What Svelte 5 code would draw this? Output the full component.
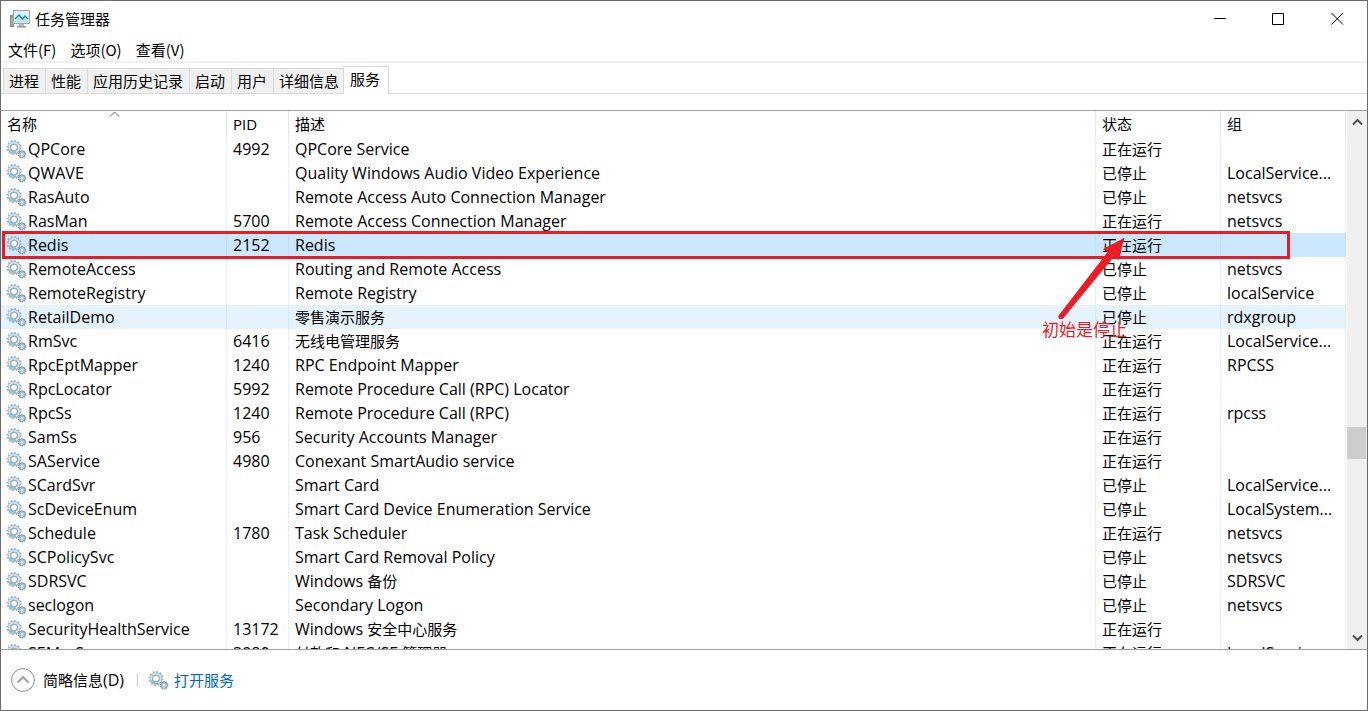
<script>
  const tabs = ['进程', '性能', '应用历史记录', '启动', '用户', '详细信息', '服务'];
  const menus = ['文件(F)', '选项(O)', '查看(V)'];
  const on = '正在运行';
  const off = '已停止';
  const services = [
    ['QPCore', '4992', 'QPCore Service', on, ''],
    ['QWAVE', '', 'Quality Windows Audio Video Experience', off, 'LocalService...'],
    ['RasAuto', '', 'Remote Access Auto Connection Manager', off, 'netsvcs'],
    ['RasMan', '5700', 'Remote Access Connection Manager', on, 'netsvcs'],
    ['Redis', '2152', 'Redis', on, ''],
    ['RemoteAccess', '', 'Routing and Remote Access', off, 'netsvcs'],
    ['RemoteRegistry', '', 'Remote Registry', off, 'localService'],
    ['RetailDemo', '', '零售演示服务', off, 'rdxgroup'],
    ['RmSvc', '6416', '无线电管理服务', on, 'LocalService...'],
    ['RpcEptMapper', '1240', 'RPC Endpoint Mapper', on, 'RPCSS'],
    ['RpcLocator', '5992', 'Remote Procedure Call (RPC) Locator', on, ''],
    ['RpcSs', '1240', 'Remote Procedure Call (RPC)', on, 'rpcss'],
    ['SamSs', '956', 'Security Accounts Manager', on, ''],
    ['SAService', '4980', 'Conexant SmartAudio service', on, ''],
    ['SCardSvr', '', 'Smart Card', off, 'LocalService...'],
    ['ScDeviceEnum', '', 'Smart Card Device Enumeration Service', off, 'LocalSystem...'],
    ['Schedule', '1780', 'Task Scheduler', on, 'netsvcs'],
    ['SCPolicySvc', '', 'Smart Card Removal Policy', off, 'netsvcs'],
    ['SDRSVC', '', 'Windows 备份', off, 'SDRSVC'],
    ['seclogon', '', 'Secondary Logon', off, 'netsvcs'],
    ['SecurityHealthService', '13172', 'Windows 安全中心服务', on, ''],
    ['SEMgrSvc', '3980', '付款和 NFC/SE 管理器', on, 'LocalService...']
  ];
  // Latin runs are set one pixel larger than Chinese runs.
  const runs = (text) => text.split(/([\u4e00-\u9fff]+)/).filter(Boolean);
  const isHan = (text) => /[\u4e00-\u9fff]/.test(text);
  let selected = $state('Redis');
  let active = $state('服务');
</script>

{#snippet gears()}
  <svg class="gears" width="21" height="20" viewBox="0 0 21 20" aria-hidden="true">
    <circle cx="8" cy="8.5" r="6.6" fill="none" stroke="#a3b6c3" stroke-width="2" stroke-dasharray="1.7 1.76" />
    <circle cx="8" cy="8.5" r="4.9" fill="none" stroke="#94aebf" stroke-width="2.8" />
    <circle cx="8" cy="8.5" r="4.8" fill="none" stroke="#cbe4f2" stroke-width="2" />
    <path d="M3.6 10.4A4.8 4.8 0 0 0 10 12.9" fill="none" stroke="#84bfe3" stroke-width="1.8" />
    <circle cx="8" cy="8.5" r="3.4" fill="#fff" stroke="#80909b" stroke-width=".9" />
    <circle cx="16" cy="15.2" r="3.7" fill="none" stroke="#8a9dab" stroke-width="1.3" stroke-dasharray="1.3 1.02" />
    <circle cx="16" cy="15.2" r="2.5" fill="#fff" stroke="#708b9e" stroke-width="1.8" />
    <circle cx="16" cy="15.2" r="2.4" fill="none" stroke="#bcdaeb" stroke-width="1" />
  </svg>
{/snippet}

{#snippet mixed(text)}{#each runs(text) as run}<span class:han={isHan(run)} class:latin={!isHan(run)}>{run}</span>{/each}{/snippet}

<div class="window">
  <header class="titlebar">
    <svg class="app-icon" width="20" height="18" viewBox="0 0 20 18" aria-hidden="true">
      <rect x=".5" y="5.5" width="3" height="11" fill="#a9adb0" stroke="#85898c" />
      <rect x="1" y="6" width="2" height="2" fill="#55c94e" />
      <path d="M9 13h5v2l2 2H7l2-2z" fill="#b6babd" />
      <path d="M7 17h9" stroke="#7e8285" />
      <rect x="3.5" y=".5" width="16" height="13" fill="#e8eaeb" stroke="#a1a5a8" />
      <rect x="5" y="2" width="13" height="10" fill="#d9f3fd" />
      <path d="M5 9l4-4 3.5 4L15 6l3 3v3H5z" fill="#b6e6f8" />
      <path d="M5 9l4-4 3.5 4L15 6l3 3" fill="none" stroke="#1683bd" stroke-width="1.2" />
    </svg>
    <h1>任务管理器</h1>
    <div class="caption">
      <button aria-label="最小化"><svg width="13" height="13" viewBox="0 0 13 13"><path d="M1 6.5h12" /></svg></button>
      <button aria-label="最大化"><svg width="13" height="13" viewBox="0 0 13 13"><path d="M.5 1.5h11v11H.5z" /></svg></button>
      <button aria-label="关闭"><svg width="13" height="13" viewBox="0 0 13 13"><path d="M.5 1l11.5 11.5M12 1L.5 12.5" /></svg></button>
    </div>
  </header>

  <nav class="menubar">
    {#each menus as menu}<button>{menu}</button>{/each}
  </nav>

  <div class="tabs" role="tablist">
    {#each tabs as tab}
      <button role="tab" aria-selected={active === tab} class:active={active === tab} onclick={() => (active = tab)}>{tab}</button>
    {/each}
  </div>

  <main>
    <div class="list">
      <table>
        <colgroup>
          <col class="c-name" /><col class="c-pid" /><col /><col class="c-state" /><col class="c-group" />
        </colgroup>
        <thead>
          <tr>
            <th aria-sort="ascending">
              名称
              <svg class="sort" width="11" height="6" viewBox="0 0 11 6" aria-hidden="true"><path d="M1 5.5l4.5-4.5L10 5.5" /></svg>
            </th>
            <th>PID</th><th>描述</th><th>状态</th><th>组</th>
          </tr>
        </thead>
        <tbody>
          {#each services as [name, pid, description, status, group]}
            <tr class:selected={selected === name} class:hover={name === 'RetailDemo'} onclick={() => (selected = name)}>
              <td class="name"><div>{@render gears()}<span class="latin">{name}</span></div></td>
              <td class="latin">{pid}</td>
              <td>{@render mixed(description)}</td>
              <td>{status}</td>
              <td class="latin">{group}</td>
            </tr>
          {/each}
        </tbody>
      </table>
      <div class="mark-box"></div>
      <svg class="mark-arrow" width="70" height="84" viewBox="0 0 70 84" aria-hidden="true">
        <path d="M2 78L51 14.5L57 19.5L6 81.5z" fill="#ed1c24" />
        <circle cx="4" cy="79.5" r="2.6" fill="#ed1c24" />
        <path d="M67 1L62 23L54 17L46 12z" fill="#ed1c24" />
      </svg>
      <p class="mark-note">初始是停止</p>
    </div>
    <div class="scrollbar">
      <button aria-label="向上滚动"><svg width="11" height="8" viewBox="0 0 11 8"><path d="M1 6.5l4.5-4.5L10 6.5" /></svg></button>
      <div class="track"><div class="thumb"></div></div>
      <button aria-label="向下滚动"><svg width="11" height="8" viewBox="0 0 11 8"><path d="M1 1.5L5.5 6L10 1.5" /></svg></button>
    </div>
  </main>

  <footer>
    <button class="details">
      <svg width="24" height="24" viewBox="0 0 24 24" aria-hidden="true">
        <circle cx="12" cy="12" r="11.4" fill="#fff" stroke="#8c8c8c" />
        <path d="M6.5 14.5L12 9l5.5 5.5" fill="none" stroke="#a0a0a0" stroke-width="2" />
      </svg>
      <span>简略信息<span class="latin">(D)</span></span>
    </button>
    <span class="divider"></span>
    <a href="#services">{@render gears()}<span>打开服务</span></a>
  </footer>
</div>

<style>
  :global(body) {
    margin: 0;
  }
  .window {
    box-sizing: border-box;
    display: flex;
    flex-direction: column;
    height: 100vh;
    border: 1px solid #6b6b6b;
    background: #fff;
    color: #000;
    font: 15px/24px 'Open Sans', 'Noto Sans CJK SC', sans-serif;
    white-space: nowrap;
    overflow: hidden;
  }
  button {
    margin: 0;
    padding: 0;
    border: 0;
    background: none;
    color: inherit;
    font: inherit;
  }
  svg {
    display: block;
    flex: none;
  }
  .titlebar {
    display: flex;
    align-items: center;
    height: 36px;
    padding-left: 9px;
    gap: 5px;
  }
  h1 {
    margin: 0;
    font: inherit;
  }
  .caption {
    display: flex;
    align-self: flex-start;
    margin-left: auto;
    height: 35px;
  }
  .caption button {
    display: grid;
    place-items: center;
    width: 59px;
  }
  .caption path {
    fill: none;
    stroke: #000;
  }
  .menubar {
    display: flex;
    gap: 14px;
    height: 24px;
    padding-left: 7px;
    border-bottom: 2px solid #f0f0f0;
    font-family: 'Noto Sans CJK SC', sans-serif;
    line-height: 26px;
  }
  .tabs {
    display: flex;
    align-items: flex-end;
    height: 31px;
    padding-left: 2px;
    box-shadow: inset 0 -1px #d9d9d9;
  }
  .tabs button {
    height: 26px;
    padding: 0 6px 0 5px;
    border: 1px solid #d9d9d9;
    border-right-width: 0;
    background: #f0f0f0;
  }
  .tabs .active {
    height: 28px;
    margin-left: -2px;
    padding: 0 8px 4px 6px;
    border-right-width: 1px;
    border-bottom: 0;
    background: #fff;
  }
  main {
    display: flex;
    flex: 1;
    min-height: 0;
    margin-top: 16px;
    border-top: 1px solid #a0a0a0;
    border-bottom: 1px solid #a0a0a0;
  }
  .list {
    position: relative;
    flex: 1;
    min-width: 0;
    overflow: hidden;
  }
  table {
    width: 100%;
    table-layout: fixed;
    border-collapse: separate;
    border-spacing: 0;
  }
  .c-name {
    width: 226px;
  }
  .c-pid {
    width: 62px;
  }
  .c-state,
  .c-group {
    width: 125px;
  }
  th,
  td {
    box-sizing: border-box;
    height: 24px;
    padding: 0 0 0 6px;
    border-right: 1px solid #e5f1fc;
    line-height: 24px;
    text-align: left;
    font-weight: 400;
    overflow: hidden;
  }
  .latin {
    font-size: 16px;
    white-space: pre;
  }
  .han {
    font-size: 15px;
  }
  th {
    position: relative;
    height: 26px;
    border-right-color: #e5e5e5;
  }
  .sort {
    position: absolute;
    top: 0;
    left: 50%;
    margin-left: -5px;
  }
  .sort path {
    fill: none;
    stroke: #606060;
  }
  .name {
    padding-left: 5px;
  }
  .name div {
    display: flex;
    align-items: center;
    gap: 1px;
  }
  .selected td {
    background: #cce8ff;
    border-right-color: #bfdff8;
  }
  .hover:not(.selected) td {
    background: #e5f3ff;
    border-right-color: #d3e8f8;
  }
  .mark-box {
    position: absolute;
    top: 120px;
    left: 1px;
    right: 56px;
    box-sizing: border-box;
    height: 28px;
    border: 3px solid #ed1c24;
  }
  .mark-arrow {
    position: absolute;
    top: 126px;
    right: 219px;
  }
  .mark-note {
    position: absolute;
    top: 207px;
    right: 219px;
    margin: 0;
    color: #ed1c24;
    font-size: 17px;
  }
  .scrollbar {
    display: flex;
    flex-direction: column;
    width: 20px;
    margin-left: 1px;
    background: #f0f0f0;
  }
  .scrollbar button {
    display: grid;
    place-items: center;
    height: 22px;
  }
  .scrollbar path {
    fill: none;
    stroke: #505050;
    stroke-width: 2;
  }
  .track {
    flex: 1;
    padding-right: 1px;
  }
  .thumb {
    height: 32px;
    margin-top: 294px;
    background: #cdcdcd;
  }
  footer {
    display: flex;
    align-items: center;
    height: 60px;
    padding-left: 10px;
    gap: 10px;
  }
  footer .details,
  footer a {
    display: flex;
    align-items: center;
    gap: 8px;
  }
  .details {
    padding-right: 3px;
  }
  footer a {
    gap: 5px;
    color: #0066cc;
    text-decoration: none;
  }
  .divider {
    width: 1px;
    height: 14px;
    background: #d0d0d0;
  }
</style>
